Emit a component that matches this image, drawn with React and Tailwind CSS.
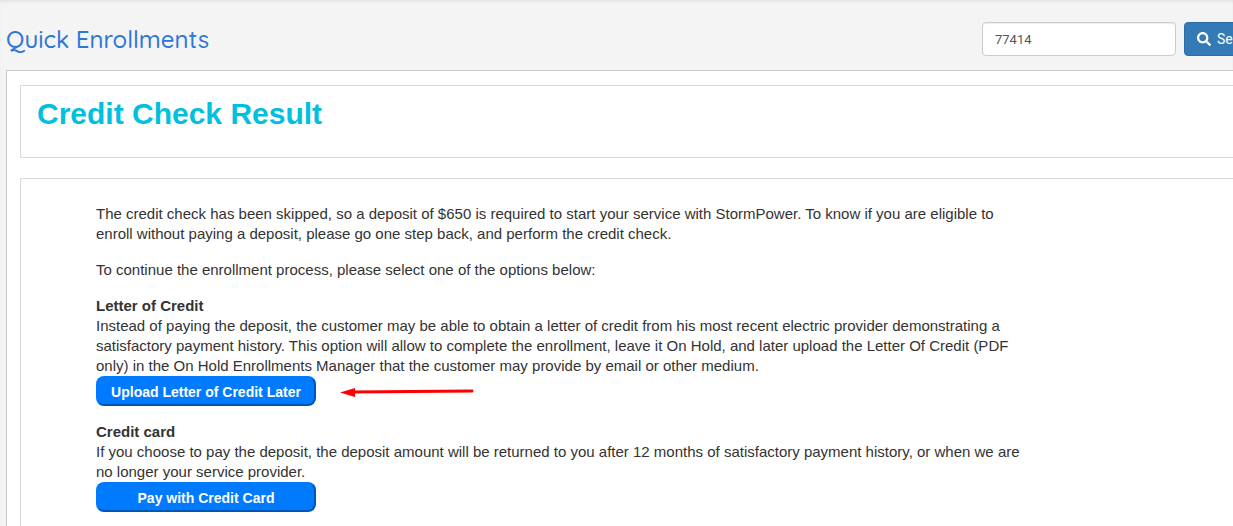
import { useState } from 'react'
import { FaSearch } from 'react-icons/fa'

function OptionButton({ children }) {
  return (
    <button
      type="button"
      className="w-[220px] h-[30px] rounded-lg bg-[#007bff] border-2 border-t-[#007bff] border-l-[#007bff] border-r-[#0056b3] border-b-[#0056b3] pt-0.5 text-white text-[14px] leading-5 font-bold cursor-pointer"
    >
      {children}
    </button>
  )
}

export default function App() {
  const [query, setQuery] = useState('77414')

  return (
    <div className="min-h-screen flex flex-col overflow-x-hidden bg-[#f4f4f4] pl-1.5 font-['Liberation_Sans',Arial,sans-serif] text-[#333] shadow-[inset_0_3px_3px_-1px_#e4e4e4]">
      <header className="flex items-center h-[70px] pt-2 -mr-[42px]">
        <h1 className="flex-1 text-[24px] leading-8 font-medium text-[#2b78d5] font-['Quicksand','Lato',sans-serif]">
          Quick Enrollments
        </h1>
        <form className="flex gap-2" onSubmit={(e) => e.preventDefault()}>
          <input
            type="text"
            aria-label="Search enrollments"
            value={query}
            onChange={(e) => setQuery(e.target.value)}
            className="w-[194px] h-[34px] px-3 rounded border border-[#ccc] bg-white text-[13px] text-[#555] font-[Roboto,sans-serif] shadow-[inset_0_1px_1px_rgba(0,0,0,0.075)]"
          />
          <button
            type="submit"
            className="flex items-center gap-1.5 w-[91px] h-[34px] px-3 rounded border border-[#2e6da4] bg-[#337ab7] text-white text-[14px] font-[Roboto,sans-serif]"
          >
            <FaSearch className="w-3.5 h-3.5 shrink-0" />
            Search
          </button>
        </form>
      </header>

      <main className="flex-1 flex flex-col gap-5 border-l border-t border-[#c8c8c8] bg-white pt-3.5 pl-[13px]">
        <section className="border border-r-0 border-[#d8d8d8] px-4 pt-2.5 pb-[25px]">
          <h2 className="text-[30px] leading-9 font-bold text-[#00bfdf]">Credit Check Result</h2>
        </section>

        <section className="flex-1 border-l border-t border-[#d8d8d8] pt-[25px] pl-[75px] pb-3">
          <div className="max-w-[930px] flex flex-col gap-4 text-[15px] leading-5">
            <p>
              The credit check has been skipped, so a deposit of $650 is required to start your service with
              StormPower. To know if you are eligible to enroll without paying a deposit, please go one step
              back, and perform the credit check.
            </p>
            <p>To continue the enrollment process, please select one of the options below:</p>

            <div>
              <h3 className="font-bold">Letter of Credit</h3>
              <p>
                Instead of paying the deposit, the customer may be able to obtain a letter of credit from his
                most recent electric provider demonstrating a satisfactory payment history. This option will
                allow to complete the enrollment, leave it On Hold, and later upload the Letter Of Credit (PDF
                only) in the On Hold Enrollments Manager that the customer may provide by email or other
                medium.
              </p>
              <div className="flex items-center gap-6">
                <OptionButton>Upload Letter of Credit Later</OptionButton>
                <svg className="w-[134px] h-3" viewBox="0 0 134 12" fill="none" aria-hidden="true">
                  <path d="M12 7L132 6" stroke="#ff0000" strokeWidth="3" strokeLinecap="round" />
                  <path d="M0 7.5L15 3V12Z" fill="#ff0000" />
                </svg>
              </div>
            </div>

            <div>
              <h3 className="font-bold">Credit card</h3>
              <p>
                If you choose to pay the deposit, the deposit amount will be returned to you after 12 months of
                satisfactory payment history, or when we are no longer your service provider.
              </p>
              <div className="flex">
                <OptionButton>Pay with Credit Card</OptionButton>
              </div>
            </div>
          </div>
        </section>
      </main>
    </div>
  )
}
